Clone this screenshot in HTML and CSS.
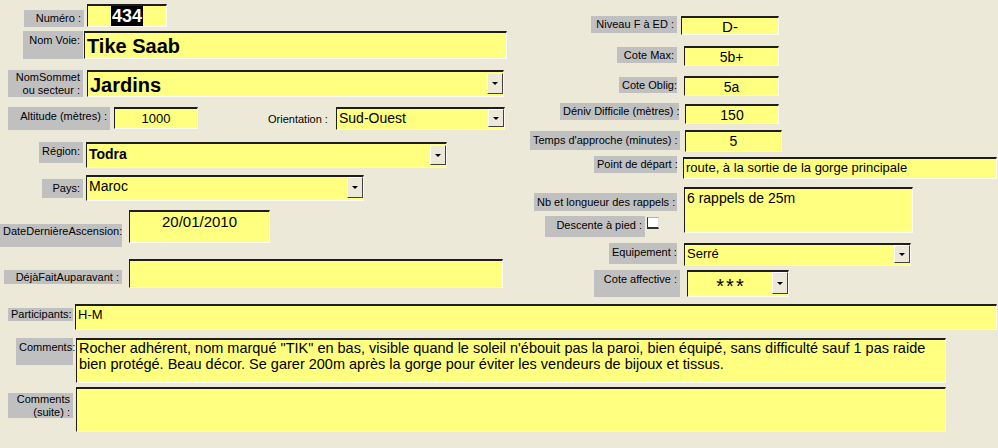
FILE: index.html
```html
<!DOCTYPE html>
<html lang="fr">
<head>
    <meta charset="UTF-8">
    <title>Voie - Tike Saab</title>
    <link rel="stylesheet" href="styles.css">
</head>
<body>
    <div class="form">
        <div class="top">
            <div class="col-left">
                <div class="row row-numero">
                    <div class="lbl lbl-numero">Numéro :</div>
                    <div class="fld fld-numero"><span class="sel">434</span></div>
                </div>
                <div class="row row-voie">
                    <div class="lbl lbl-voie">Nom Voie:</div>
                    <div class="fld fld-voie big">Tike Saab</div>
                </div>
                <div class="row row-sommet">
                    <div class="lbl lbl-sommet">NomSommet<br>ou secteur :</div>
                    <div class="fld fld-sommet combo"><span class="big">Jardins</span><span class="drop"></span></div>
                </div>
                <div class="row row-alt">
                    <div class="lbl lbl-alt">Altitude (mètres) :</div>
                    <div class="fld fld-alt center">1000</div>
                    <div class="plain lbl-orient">Orientation :</div>
                    <div class="fld fld-orient combo"><span>Sud-Ouest</span><span class="drop"></span></div>
                </div>
                <div class="row row-region">
                    <div class="lbl lbl-region">Région:</div>
                    <div class="fld fld-region combo"><span class="bold">Todra</span><span class="drop"></span></div>
                </div>
                <div class="row row-pays">
                    <div class="lbl lbl-pays">Pays:</div>
                    <div class="fld fld-pays combo"><span>Maroc</span><span class="drop"></span></div>
                </div>
                <div class="row row-date">
                    <div class="lbl lbl-date">DateDernièreAscension:</div>
                    <div class="fld fld-date center">20/01/2010</div>
                </div>
                <div class="row row-deja">
                    <div class="lbl lbl-deja">DéjàFaitAuparavant :</div>
                    <div class="fld fld-deja"></div>
                </div>
            </div>

            <div class="col-right">
                <div class="rrow rr-niveau">
                    <div class="rslot"><div class="lbl lbl-niveau">Niveau F à ED :</div></div>
                    <div class="fld fld-niveau center">D-</div>
                </div>
                <div class="rrow rr-max">
                    <div class="rslot"><div class="lbl lbl-max">Cote Max:</div></div>
                    <div class="fld fld-small center">5b+</div>
                </div>
                <div class="rrow rr-oblig">
                    <div class="rslot"><div class="lbl lbl-oblig">Cote Oblig:</div></div>
                    <div class="fld fld-small center">5a</div>
                </div>
                <div class="rrow rr-deniv">
                    <div class="rslot"><div class="lbl lbl-deniv">Déniv Difficile (mètres) :</div></div>
                    <div class="fld fld-deniv center">150</div>
                </div>
                <div class="rrow rr-temps">
                    <div class="rslot"><div class="lbl lbl-temps">Temps d'approche (minutes) :</div></div>
                    <div class="fld fld-temps center">5</div>
                </div>
                <div class="rrow rr-point">
                    <div class="rslot"><div class="lbl lbl-point">Point de départ :</div></div>
                    <div class="fld fld-point">route, à la sortie de la gorge principale</div>
                </div>
                <div class="rrow rr-rappels">
                    <div class="rslot rslot-stack">
                        <div class="lbl lbl-rappels">Nb et longueur des rappels :</div>
                        <div class="descente">
                            <div class="lbl lbl-descente">Descente à pied :</div>
                            <span class="check"></span>
                        </div>
                    </div>
                    <div class="fld fld-rappels">6 rappels de 25m</div>
                </div>
                <div class="rrow rr-equip">
                    <div class="rslot"><div class="lbl lbl-equip">Equipement :</div></div>
                    <div class="fld fld-equip combo"><span>Serré</span><span class="drop"></span></div>
                </div>
                <div class="rrow rr-affect">
                    <div class="rslot"><div class="lbl lbl-affect">Cote affective :</div></div>
                    <div class="fld fld-affect combo"><span class="stars">***</span><span class="drop"></span></div>
                </div>
            </div>
        </div>

        <div class="bottom">
            <div class="row row-part">
                <div class="bslot"><div class="lbl lbl-part">Participants:</div></div>
                <div class="fld fld-part">H-M</div>
            </div>
            <div class="row row-comm">
                <div class="bslot"><div class="lbl lbl-comm">Comments:</div></div>
                <div class="fld fld-comm">Rocher adhérent, nom marqué "TIK" en bas, visible quand le soleil n'ébouit pas la paroi, bien équipé, sans difficulté sauf 1 pas raide bien protégé. Beau décor. Se garer 200m après la gorge pour éviter les vendeurs de bijoux et tissus.</div>
            </div>
            <div class="row row-suite">
                <div class="bslot"><div class="lbl lbl-suite">Comments<br>(suite) :</div></div>
                <div class="fld fld-comm"></div>
            </div>
        </div>
    </div>
</body>
</html>
```

FILE: styles.css
```css
* {
    margin: 0;
    padding: 0;
    box-sizing: border-box;
}

body {
    background: #ece9d8;
    font-family: "Liberation Sans", Arial, sans-serif;
    color: #000;
    width: 998px;
    height: 448px;
    overflow: hidden;
}

.form {
    width: 998px;
}

.top {
    display: flex;
    height: 300px;
}

.col-left {
    width: 520px;
}

.col-right {
    width: 478px;
}

.row,
.rrow {
    display: flex;
    align-items: flex-start;
}

/* labels */
.lbl {
    background: #c0c0c0;
    font-size: 11px;
    line-height: 13px;
    text-align: right;
    padding: 2px 3px 0 3px;
    white-space: nowrap;
}

.plain {
    font-size: 11px;
    line-height: 13px;
    white-space: nowrap;
}

/* text boxes */
.fld {
    background: #ffff80;
    border-top: 2px solid #1e1e1e;
    border-left: 1px solid #1e1e1e;
    border-right: 1px solid #fbfbf4;
    border-bottom: 1px solid #fbfbf4;
    font-size: 13px;
    line-height: 16px;
    padding: 1px 2px 0 2px;
    white-space: nowrap;
    overflow: hidden;
}

.fld.center {
    text-align: center;
}

.big {
    font-size: 20px;
    font-weight: bold;
    line-height: 22px;
}

.bold {
    font-weight: bold;
    font-size: 14px;
}

.combo {
    display: flex;
    align-items: flex-start;
    padding-right: 0;
}

.drop {
    margin-left: auto;
    width: 16px;
    flex-shrink: 0;
    align-self: stretch;
    margin-top: -1px;
    margin-bottom: 2px;
    background: #ece9d8;
    border: 1px solid;
    border-color: #fff #404040 #404040 #fff;
    display: flex;
    align-items: center;
    justify-content: center;
}

.drop::after {
    content: "";
    border-left: 3px solid transparent;
    border-right: 3px solid transparent;
    border-top: 3px solid #000;
}

/* left column */
.row-numero { margin-top: 4px; }
.lbl-numero { margin: 6px 0 0 24px; width: 60px; height: 17px; }
.fld-numero {
    margin-left: 3px;
    width: 80px;
    height: 23px;
    display: flex;
    justify-content: center;
    padding: 0;
}
.sel {
    background: #000;
    color: #fff;
    font-weight: bold;
    font-size: 18px;
    line-height: 20px;
    padding: 0 1px;
}

.row-voie { margin-top: 4px; }
.lbl-voie { margin-left: 23px; width: 60px; height: 28px; padding-top: 3px; }
.fld-voie { margin-left: 1px; width: 423px; height: 28px; padding-top: 2px; }

.row-sommet { margin-top: 11px; }
.lbl-sommet { margin-left: 8px; width: 75px; height: 27px; padding-top: 1px; }
.fld-sommet { margin-left: 4px; width: 417px; height: 27px; padding-top: 2px; }

.row-alt { margin-top: 10px; }
.lbl-alt { margin-left: 8px; width: 102px; height: 23px; padding-top: 3px; }
.fld-alt { margin-left: 4px; width: 84px; height: 22px; font-size: 13px; padding-top: 2px; }
.lbl-orient { margin: 6px 0 0 70px; width: 62px; }
.fld-orient { margin-left: 6px; width: 169px; height: 23px; font-size: 14px; }

.row-region { margin-top: 12px; }
.lbl-region { margin-left: 39px; width: 44px; height: 21px; padding-top: 3px; }
.fld-region { margin-left: 3px; width: 361px; height: 26px; padding-top: 2px; }

.row-pays { margin-top: 7px; }
.lbl-pays { margin: 4px 0 0 42px; width: 41px; height: 19px; padding-top: 3px; }
.fld-pays { margin-left: 3px; width: 278px; height: 26px; font-size: 14px; }

.row-date { margin-top: 9px; }
.lbl-date { margin-top: 14px; width: 122px; height: 23px; padding-top: 1px; }
.fld-date { margin-left: 7px; width: 141px; height: 33px; font-size: 15px; line-height: 18px; }

.row-deja { margin-top: 12px; }
.lbl-deja { margin: 11px 0 0 4px; width: 118px; height: 14px; padding-top: 1px; }
.fld-deja { margin-left: 7px; width: 374px; height: 29px; }

/* right column */
.rslot {
    width: 157px;
    display: flex;
    justify-content: flex-end;
    align-items: flex-start;
}

.rrow .fld {
    margin-left: 7px;
    font-size: 14px;
}

.rr-niveau { margin-top: 16px; }
.lbl-niveau { width: 86px; height: 17px; }
.fld-niveau { width: 98px; height: 19px; line-height: 15px; }
.rrow .fld-niveau { margin-left: 4px; font-size: 15px; }

.fld-small { width: 95px; height: 20px; }

.rr-max { margin-top: 11px; }
.lbl-max { margin-top: 1px; width: 60px; height: 16px; }

.rr-oblig { margin-top: 10px; }
.lbl-oblig { margin-top: 1px; width: 58px; height: 16px; }

.rr-deniv { margin-top: 7px; }
.lbl-deniv { width: 119px; height: 17px; margin-right: -2px; }
.fld-deniv { margin-top: 1px; width: 94px; height: 20px; }
.rrow .fld-deniv { margin-left: 8px; }

.rr-temps { margin-top: 6px; }
.lbl-temps { margin-top: 1px; width: 150px; height: 19px; margin-right: -3px; padding-top: 3px; }
.fld-temps { width: 97px; height: 22px; }
.rrow .fld-temps { margin-left: 8px; }

.rr-point { margin-top: 4px; }
.lbl-point { width: 83px; height: 17px; }
.fld-point { margin-top: 1px; width: 314px; height: 22px; }
.rrow .fld-point { margin-left: 6px; font-size: 13px; }

.rr-rappels { margin-top: 8px; }
.rslot-stack {
    flex-direction: column;
    align-items: flex-end;
}
.lbl-rappels { margin-top: 6px; width: 143px; height: 18px; padding-top: 3px; }
.descente {
    display: flex;
    align-items: flex-start;
    margin-top: 5px;
    margin-right: 18px;
}
.lbl-descente { width: 100px; height: 21px; padding-top: 3px; }
.check {
    width: 12px;
    height: 12px;
    margin: 1px 0 0 2px;
    background: #fff;
    border-left: 1px solid #303030;
    border-bottom: 2px solid #303030;
    border-top: 1px solid #b0b0b0;
    border-right: 1px solid #e0e0e0;
}
.fld-rappels { width: 229px; height: 46px; padding-top: 1px; }

.rr-equip { margin-top: 6px; }
.lbl-equip { width: 68px; height: 21px; padding-top: 3px; }
.fld-equip { width: 227px; height: 23px; }
.rrow .fld-equip { font-size: 13px; }

.rr-affect { margin-top: 4px; }
.lbl-affect { width: 86px; height: 27px; margin-right: -3px; padding-top: 3px; }
.fld-affect { width: 102px; height: 27px; }
.rrow .fld-affect { margin-left: 10px; }
.stars {
    flex: 1;
    text-align: center;
    font-size: 20px;
    line-height: 20px;
    letter-spacing: 2px;
    padding-top: 3px;
}

/* bottom */
.bslot {
    width: 73px;
    display: flex;
    justify-content: flex-end;
    align-items: flex-start;
}

.row-part { margin-top: 4px; }
.lbl-part { margin-top: 4px; width: 65px; height: 13px; padding-top: 0; }
.fld-part { margin-left: 2px; width: 922px; height: 26px; }

.row-comm { margin-top: 8px; }
.lbl-comm { width: 57px; height: 27px; padding-top: 3px; }
.fld-comm {
    margin-left: 3px;
    width: 870px;
    height: 45px;
    white-space: normal;
    font-size: 14.5px;
    line-height: 16px;
    padding-top: 0;
}

.row-suite { margin-top: 4px; }
.lbl-suite { margin-top: 6px; width: 65px; height: 25px; padding-top: 0; }
```
